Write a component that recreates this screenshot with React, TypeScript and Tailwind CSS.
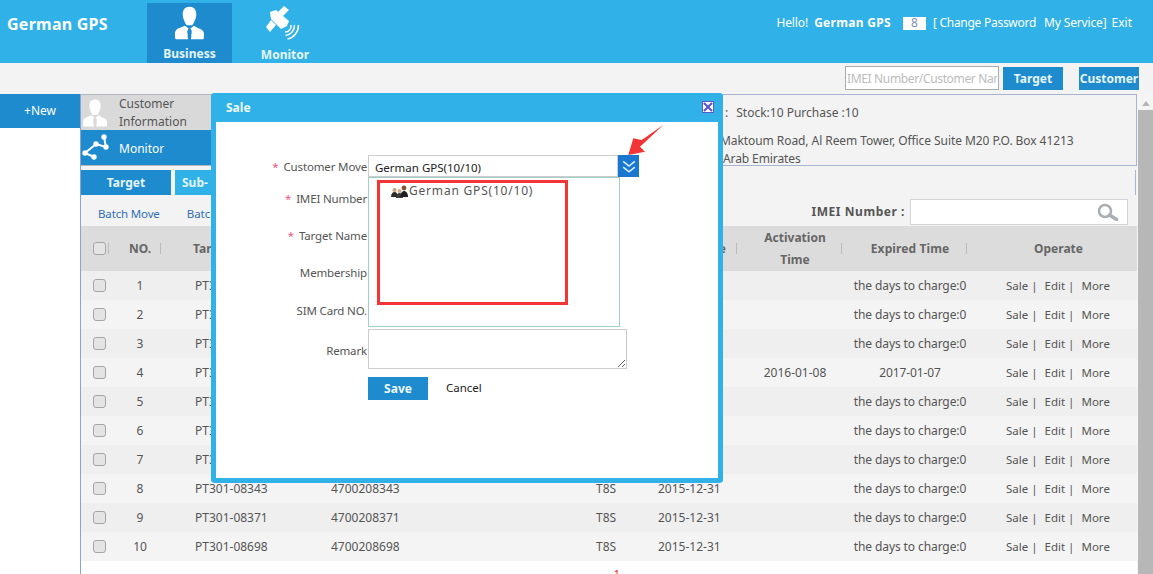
import React from "react";

const PersonIcon = ({ className, tie }: { className?: string; tie: string }) => (
  <svg viewBox="0 0 32 36" className={className}>
    <path fill="#fff" d="M16 0c-5 0-7.500 3.500-7.500 8 0 3 .7 5 1.500 7 .8 2.300 2 4.500 3 5.500h6c1-1 2.200-3.200 3-5.500.8-2 1.500-4 1.500-7 0-4.500-2.500-8-7.500-8z" />
    <path fill="#fff" d="M11 21l4 3-1.500 3 1 9H2c-1 0-2-.5-2-2v-4c0-4 2-5.500 5-6.500zM21 21l4 2.500c3 1 7 2.500 7 6.500v4c0 1.500-1 2-2 2H17.500l1-9-1.500-3z" />
    <path fill={tie} d="M14.800 25h2.400l.6 2-.6 1 .8 6-2 2-2-2 .8-6-.6-1z" />
  </svg>
);

const SatelliteIcon = () => (
  <svg viewBox="0 0 40 38" className="h-[38px] w-[40px]">
    <g fill="#fff">
      <path d="M19 1l5 4-6 6-5-4z" />
      <path d="M6 15l5 5-6 7-4-5z" />
      <path d="M5 7l6-2 13 11-2 5-6 3-10-10z" />
    </g>
    <g fill="none" stroke="#fff" strokeWidth="1.500">
      <path d="M26 20a6 6 0 0 1-6 7" />
      <path d="M29.500 20a10 10 0 0 1-9 10.500" />
      <path d="M33.500 20a14 14 0 0 1-11 14" />
    </g>
  </svg>
);

const MonitorIcon = () => (
  <svg viewBox="0 0 28 30" className="h-[30px] w-[28px]">
    <path fill="none" stroke="#fff" strokeWidth="2" d="M22 4l2 10-10-3-11 9 9 4" />
    <g fill="#fff">
      <circle cx="22" cy="4" r="2.700" />
      <circle cx="24" cy="14" r="2.700" />
      <circle cx="14" cy="11" r="2.700" />
      <circle cx="3" cy="20" r="2.700" />
      <circle cx="12" cy="24" r="2.700" />
    </g>
  </svg>
);

const GroupIcon = () => (
  <svg viewBox="0 0 17 13" className="h-[13px] w-[17px] shrink-0">
    <circle cx="3.500" cy="5" r="2" fill="#c9a07a" />
    <path fill="#2b2b2b" d="M0 12c0-3 1.500-5 3.500-5S7 9 7 12z" />
    <circle cx="8.500" cy="6" r="2" fill="#d3ac88" />
    <path fill="#3b3b3b" d="M5 13c0-3 1.500-5 3.500-5S12 10 12 13z" />
    <circle cx="13" cy="3" r="2.400" fill="#8a5230" />
    <path fill="#1f1f1f" d="M9.500 12c0-4 1.500-6 3.500-6s4 2 4 6z" />
  </svg>
);

const Checkbox = () => (
  <span className="block h-[13px] w-[13px] rounded-[3px] border border-[#a5a5a5] bg-[#e4e4e4]" />
);

const rows = Array.from({ length: 10 }, (_, i) => {
  const n = i + 1;
  const full: Record<number, [string, string]> = {
    8: ["PT301-08343", "4700208343"],
    9: ["PT301-08371", "4700208371"],
    10: ["PT301-08698", "4700208698"],
  };
  return {
    n,
    name: full[n]?.[0] ?? "PT301",
    imei: full[n]?.[1] ?? "",
    model: full[n] ? "T8S" : "",
    date: full[n] ? "2015-12-31" : "",
    activation: n === 4 ? "2016-01-08" : "",
    expired: n === 4 ? "2017-01-07" : "the days to charge:0",
  };
});

const grid = "grid grid-cols-[38px_42px_170px_265px_62px_79px_116px_114px_169px]";

const FormRow = ({ label, required, className }: { label: string; required?: boolean; className: string }) => (
  <div className={`flex items-center ${className}`}>
    <div className="w-[151px] whitespace-nowrap pt-[2px] text-right text-[11.5px] tracking-[-0.15px]">
      {required && <span className="mr-[5px] text-[#f0588a]">*</span>}
      {label}
    </div>
  </div>
);

export default function App() {
  return (
    <div className="relative flex h-[574px] w-[1153px] flex-col overflow-hidden bg-white font-['Noto_Sans','Liberation_Sans',sans-serif] text-[12px] text-[#555]">
      {/* Header */}
      <header className="flex h-[63px] shrink-0 bg-[#30b1e7] text-white">
        <div className="w-[147px] pl-[7px] pt-[12px] text-[16px] font-bold leading-[24px] tracking-[0.25px]">German GPS</div>
        <div className="mt-[3px] flex h-[60px] w-[85px] flex-col items-center bg-[#1d8bce] pt-[3px]">
          <PersonIcon className="h-[34px] w-[29px]" tie="#1d8bce" />
          <span className="mt-[6px] text-[12px] font-bold leading-[16px] text-[#e6f5fd]">Business</span>
        </div>
        <div className="mt-[3px] flex h-[60px] w-[106px] flex-col items-center pt-[2px]">
          <SatelliteIcon />
          <span className="mt-[4px] text-[12px] font-bold leading-[16px] text-[#e6f5fd]">Monitor</span>
        </div>
        <div className="ml-auto flex h-[46px] items-center pr-[21px] leading-none">
          <span className="tracking-[-0.1px]">Hello!</span>
          <span className="ml-[6px] font-bold tracking-[0.3px]">German GPS</span>
          <span className="ml-[12px] flex h-[13px] w-[23px] items-center justify-center bg-white text-[#7c8fb0]">8</span>
          <span className="ml-[7px] tracking-[-0.27px]">[ Change Password</span>
          <span className="ml-[8px] tracking-[-0.15px]">My Service]</span>
          <span className="ml-[5px]">Exit</span>
        </div>
      </header>

      {/* Toolbar */}
      <div className="flex h-[31px] shrink-0 items-start justify-end bg-[#f3f3f3] pr-[14px] pt-[3px]">
        <input
          readOnly
          placeholder="IMEI Number/Customer Name"
          className="h-[24px] w-[154px] border border-[#aaa] bg-white px-[1px] text-[12px] tracking-[-0.35px] placeholder:text-[#bbb]"
        />
        <div className="ml-[4px] mt-[1px] flex h-[23px] w-[60px] items-center justify-center bg-[#1d8bce] font-bold text-[#e6f5fd]">Target</div>
        <div className="ml-[16px] mt-[1px] flex h-[23px] w-[60px] items-center justify-center overflow-hidden whitespace-nowrap bg-[#1d8bce] font-bold text-[#e6f5fd]">Customer</div>
      </div>

      {/* Main */}
      <div className="flex min-h-0 flex-1">
        <aside className="w-[80px] shrink-0">
          <div className="flex h-[34px] items-center justify-center bg-[#1d8bce] text-white">+New</div>
        </aside>

        <main className="w-[1057px] shrink-0 border-l border-[#8aa4cc]">
          {/* Top panel */}
          <div className="flex h-[72px]">
            <div className="w-[130px] shrink-0">
              <div className="flex h-[36px] items-center border-t border-[#b5b5c0] bg-[#d9d9d9]">
                <div className="w-[38px] shrink-0 pl-[2px]">
                  <PersonIcon className="h-[32px] w-[24px]" tie="#d9d9d9" />
                </div>
                <div className="leading-[18px]">Customer<br />Information</div>
              </div>
              <div className="flex h-[36px] items-center border-b border-[#b5b5c0] bg-[#1d8bce] text-white">
                <div className="w-[38px] shrink-0 pl-[1px]"><MonitorIcon /></div>
                <div className="pt-[2px]">Monitor</div>
              </div>
            </div>
            <div className="flex-1 border border-[#a9b5d0] bg-[#f3f3f3] pl-[508px] pt-[9px] leading-[18px]">
              <div className="pl-[5px]">:<span className="ml-[8px]">Stock:10 Purchase :10</span></div>
              <div className="mt-[10px] whitespace-nowrap tracking-[-0.07px]">Maktoum Road, Al Reem Tower, Office Suite M20 P.O. Box 41213</div>
              <div className="pl-[3px] tracking-[-0.1px]">Arab Emirates</div>
            </div>
          </div>

          {/* Actions */}
          <div className="h-[60px] bg-[#f3f3f3] pt-[4px]">
            <div className="flex h-[25px] font-bold text-[#e6f5fd]">
              <div className="flex w-[90px] items-center justify-center bg-[#1d8bce] pt-[1px]">Target</div>
              <div className="ml-[4px] flex w-[90px] items-center bg-[#30b1e7] pl-[7px] pt-[1px]">Sub-</div>
              <div className="ml-auto mr-[1px] w-px bg-[#a9b5d0]" />
            </div>
            <div className="flex h-[31px] items-center pr-[9px] text-[#2f6fb5]">
              <span className="ml-[17px] mt-[6px] text-[11.5px] tracking-[-0.15px]">Batch Move</span>
              <span className="ml-[27px] mt-[6px] text-[11.5px]">Batch</span>
              <span className="ml-auto mt-[2px] font-bold tracking-[0.55px] text-[#555]">IMEI Number :</span>
              <div className="ml-[5px] mt-[2px] flex h-[26px] w-[218px] items-center justify-end border border-[#d5d5d5] bg-white pr-[8px]">
                <svg viewBox="0 0 22 18" className="h-[18px] w-[22px]" fill="none" stroke="#aaaeb2">
                  <circle cx="8" cy="8" r="6" strokeWidth="2.500" />
                  <path d="M12.500 12l7 4.500" strokeWidth="3.500" strokeLinecap="round" />
                </svg>
              </div>
            </div>
          </div>

          {/* Table */}
          <div className={`${grid} relative h-[45px] items-center bg-[#dcdcdc] font-bold text-[#666]`}>
            <span className="absolute left-[27px] top-[17px] h-[11px] w-px bg-[#bbb]" />
            <span className="absolute left-[79px] top-[17px] h-[11px] w-px bg-[#bbb]" />
            <span className="absolute left-[655px] top-[17px] h-[11px] w-px bg-[#bbb]" />
            <span className="absolute left-[760px] top-[17px] h-[11px] w-px bg-[#bbb]" />
            <span className="absolute left-[885px] top-[17px] h-[11px] w-px bg-[#bbb]" />
            <div className="flex justify-center pr-[2px]"><Checkbox /></div>
            <div className="text-center">NO.</div>
            <div className="pl-[32px]">Target Name</div>
            <div />
            <div />
            <div className="pr-[11px] text-right">e</div>
            <div className="text-center leading-[22px]">Activation<br />Time</div>
            <div className="text-center tracking-[0.1px]">Expired Time</div>
            <div className="pl-[14px] text-center">Operate</div>
          </div>
          {rows.map((r) => (
            <div key={r.n} className={`${grid} h-[29px] items-center ${r.n % 2 ? "bg-[#efefef]" : "bg-[#f4f4f4]"}`}>
              <div className="flex justify-center pr-[2px]"><Checkbox /></div>
              <div className="text-center">{r.n}</div>
              <div className="pl-[34px]">{r.name}</div>
              <div>{r.imei}</div>
              <div>{r.model}</div>
              <div>{r.date}</div>
              <div className="text-center">{r.activation}</div>
              <div className="whitespace-nowrap text-center tracking-[-0.1px]">{r.expired}</div>
              <div className="flex pl-[39px] text-[11.5px]">
                <span>Sale |</span>
                <span className="ml-[7px]">Edit |</span>
                <span className="ml-[7px]">More</span>
              </div>
            </div>
          ))}
          <div className="pl-[533px] pt-[7px] text-[10px] leading-[12px] text-[#f00]">1</div>
        </main>

        {/* Scrollbar */}
        <div className="flex flex-1 flex-col bg-[#f5f5f5] pl-[1px]">
          <div className="flex h-[16px] items-center justify-center">
            <span className="mt-[2px] h-0 w-0 border-x-[4px] border-b-[5px] border-x-transparent border-b-[#b5b5b5]" />
          </div>
          <div className="flex-1 bg-[#b7b7b7]" />
        </div>
      </div>

      {/* Sale dialog */}
      <div className="absolute left-[211px] top-[93px] h-[390px] w-[512px] rounded-[4px] border-[5px] border-t-0 border-[#30b1e7] bg-white">
        <div className="relative -mx-[5px] flex h-[29px] items-center rounded-t-[4px] bg-[#30b1e7] pl-[15px] font-bold text-[#eef9fe]">
          Sale
          <span className="absolute right-[9px] top-[8px] flex h-[12px] w-[12px] items-center justify-center border border-[#5a5ad0] bg-white">
            <svg viewBox="0 0 10 10" className="h-[10px] w-[10px]" stroke="#5252cc" strokeWidth="2">
              <path d="M1 1l8 8M9 1l-8 8" />
            </svg>
          </span>
        </div>

        <div className="relative pt-[33px] leading-[22px]">
          <FormRow label="Customer Move" required className="h-[22px]" />
          <FormRow label="IMEI Number" required className="mt-[10px] h-[22px]" />
          <FormRow label="Target Name" required className="mt-[15px] h-[22px]" />
          <FormRow label="Membership" className="mt-[15px] h-[22px]" />
          <FormRow label="SIM Card NO." className="mt-[16px] h-[22px]" />
          <div className="mt-[8px] flex h-[40px] items-center">
            <div className="w-[151px] pt-[3px] text-right text-[11.5px] tracking-[-0.15px]">Remark</div>
            <textarea readOnly className="ml-[1px] h-[40px] w-[259px] border border-[#ccc] bg-white" />
          </div>
          <div className="ml-[152px] mt-[8px] flex h-[23px] items-center">
            <div className="flex h-[23px] w-[60px] items-center justify-center bg-[#1d8bce] font-bold text-[#eef9fe]">Save</div>
            <span className="mb-[2px] ml-[18px] text-[11.5px] text-[#222]">Cancel</span>
          </div>

          {/* Customer picker */}
          <div className="absolute left-[152px] top-[33px] w-[271px]">
            <div className="flex h-[22px]">
              <div className="h-[22px] w-[250px] border border-[#ccc] bg-white pl-[6px] pt-[1px] text-[11.5px] text-[#222]">German GPS(10/10)</div>
              <div className="flex h-[22px] w-[21px] items-center justify-center bg-[#1a78d0]">
                <svg viewBox="0 0 12 12" className="h-[14px] w-[14px]" fill="none" stroke="#dff0ff" strokeWidth="1.300">
                  <path d="M1 2l5 4 5-4M1 7l5 4 5-4" />
                </svg>
              </div>
            </div>
            <div className="h-[150px] w-[252px] border border-[#9fcfc9] bg-white pl-[8px] pt-[2px]">
              <div className="h-[125px] w-[191px] border-[3px] border-[#f43535] pl-[11px]">
                <div className="flex items-center gap-[1px] leading-[16px] tracking-[0.8px]">
                  <GroupIcon />
                  <span>German GPS(10/10)</span>
                </div>
              </div>
            </div>
          </div>
        </div>
      </div>

      {/* Annotation arrow */}
      <svg viewBox="0 0 44 34" className="absolute left-[620px] top-[124px] h-[34px] w-[44px]">
        <path fill="#f43535" d="M43.300 1L21.700 16 13.300 14.300 8.300 31 25 27.700 20 22.700z" />
      </svg>
    </div>
  );
}
